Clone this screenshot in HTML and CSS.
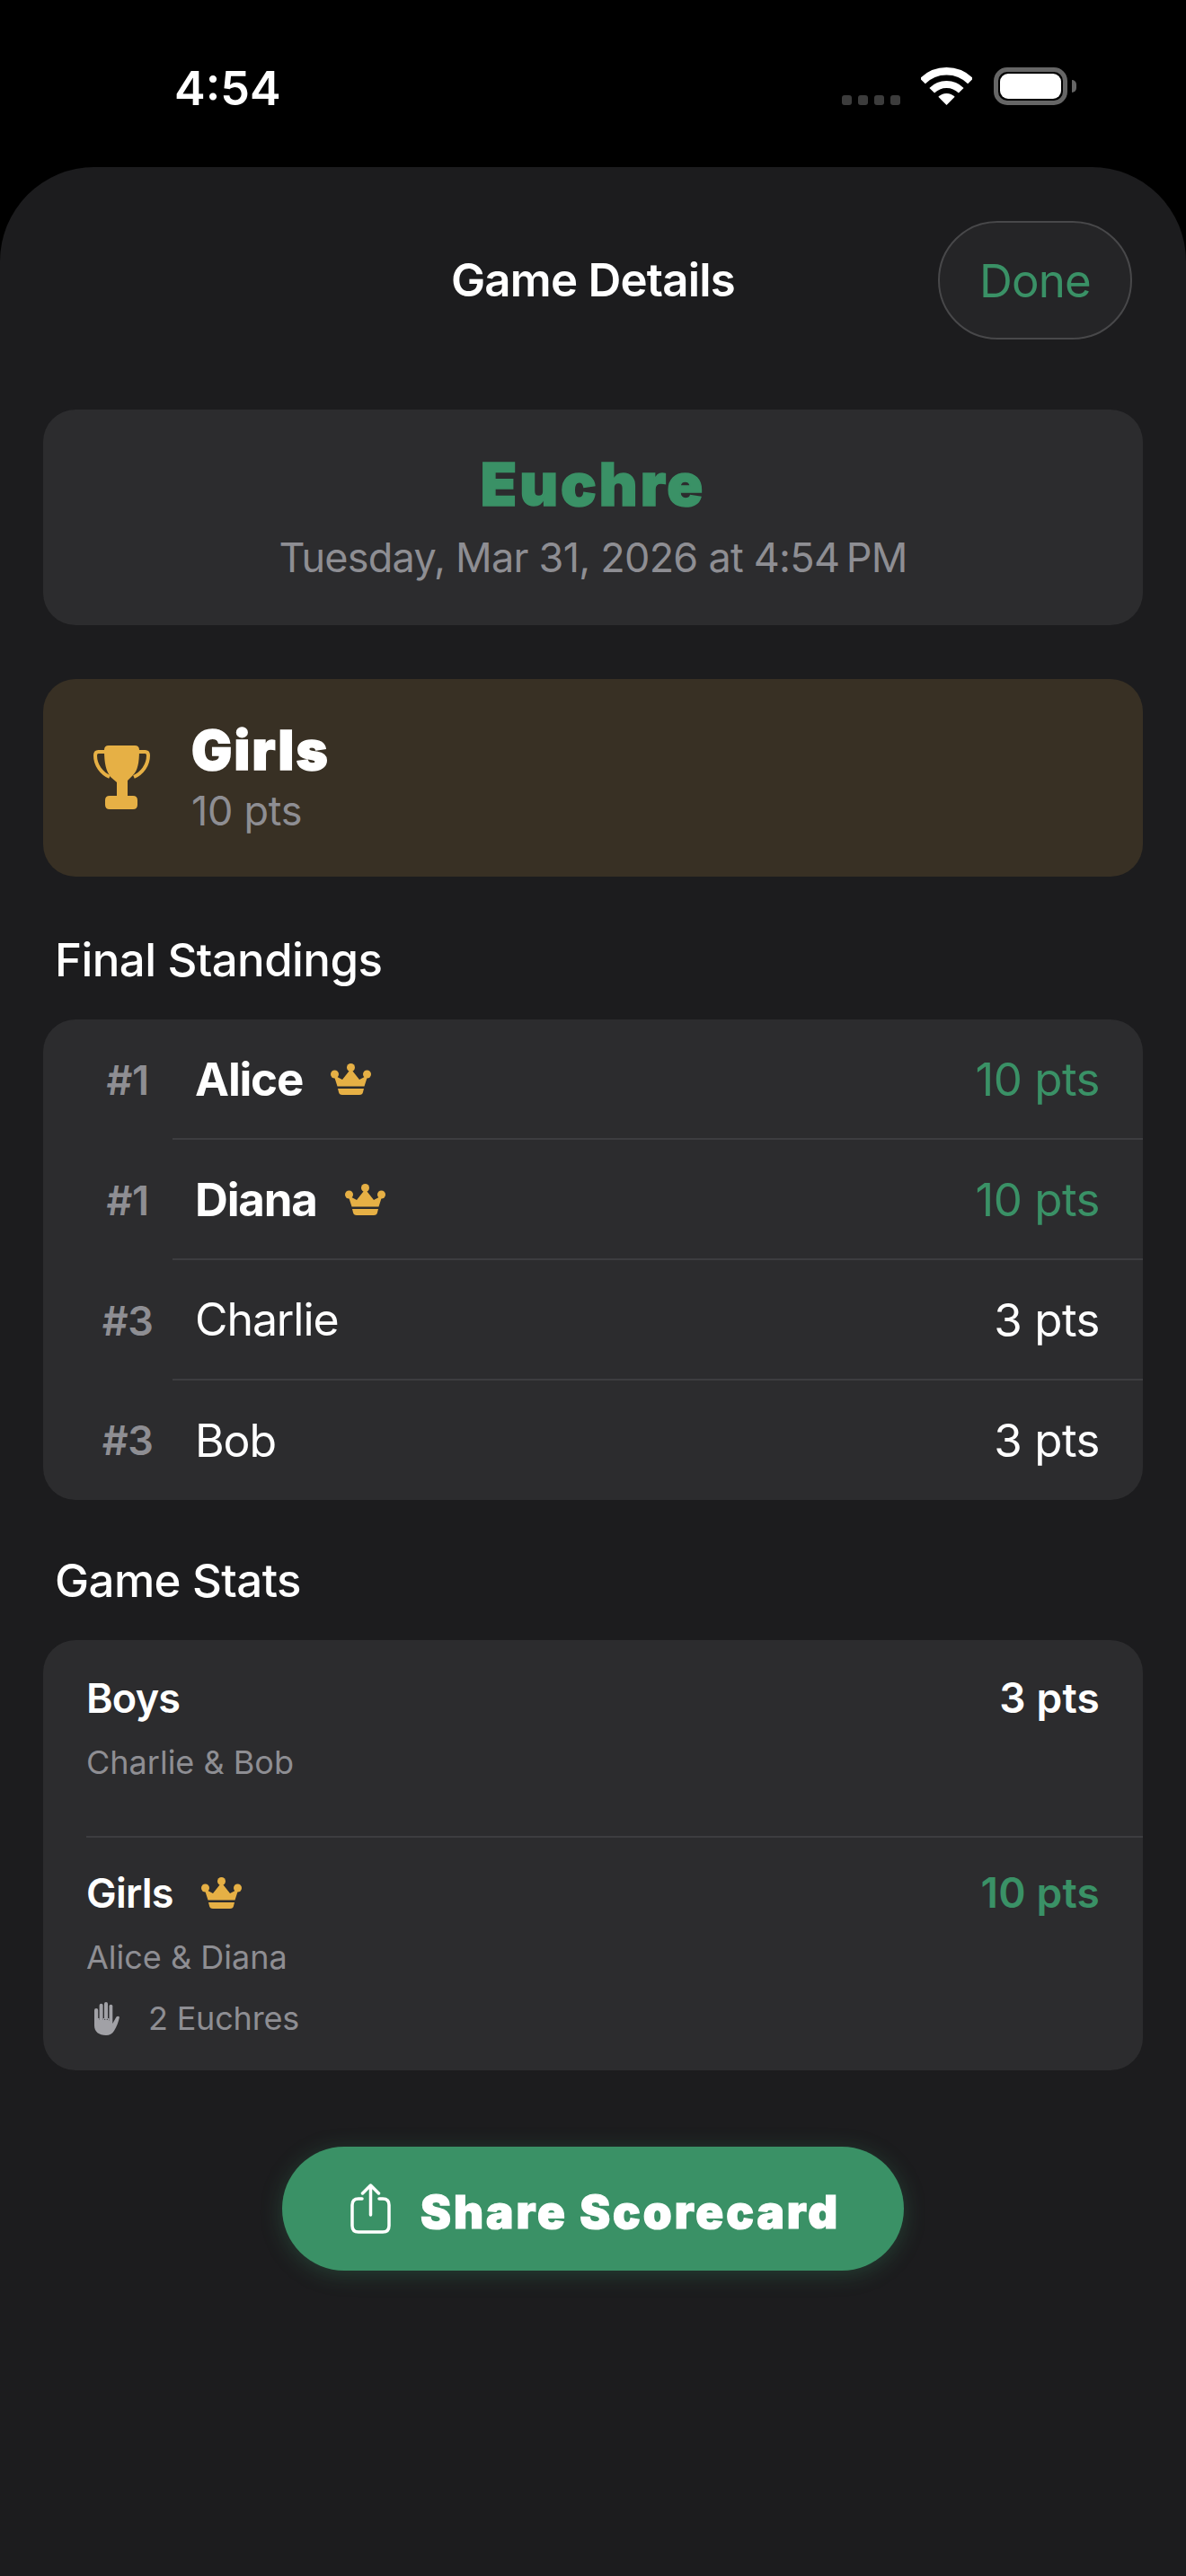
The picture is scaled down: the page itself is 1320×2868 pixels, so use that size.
FILE: index.html
```html
<!DOCTYPE html>
<html lang="en">
<head>
  <meta charset="UTF-8">
  <title>Game Details</title>
  <link rel="stylesheet" href="styles.css">
</head>
<body>

<div class="status-bar">
  <span class="time">4:54</span>
  <div class="status-icons">
    <div class="cell-dots"><i></i><i></i><i></i><i></i></div>
    <svg class="wifi" viewBox="0 0 57 42" width="57" height="42">
      <path d="M1.81 15.31A37.75 37.75 0 0 1 55.19 15.31" fill="none" stroke="#fff" stroke-width="8.5"/>
      <path d="M12.24 25.74A23 23 0 0 1 44.76 25.74" fill="none" stroke="#fff" stroke-width="8"/>
      <path d="M28.5 42L19.3 32.8A13 13 0 0 1 37.7 32.8Z" fill="#fff"/>
    </svg>
    <div class="battery"><div class="battery-fill"></div></div>
    <div class="battery-nub"></div>
  </div>
</div>

<div class="sheet">
  <div class="sheet-header">
    <span></span>
    <h1 class="sheet-title">Game Details</h1>
    <button class="done-btn">Done</button>
  </div>

  <div class="card hero">
    <div class="hero-title">Euchre</div>
    <div class="hero-date">Tuesday, Mar 31, 2026 at 4:54&#8201;PM</div>
  </div>

  <div class="card winner">
    <svg class="trophy" viewBox="0 0 63 71" width="63" height="71">
      <path d="M12 5Q12 0 17 0H46Q51 0 51 5C51 20 49 28 44 33L38 39V56H44Q49 56 49 61V66Q49 71 44 71H18Q13 71 13 66V61Q13 56 18 56H26V41L19 35C14 28 12 20 12 5Z" fill="#e6b045"/>
      <path d="M13 7H5.500Q2 7 2 11C2 22 9 31 18 35M50 7H57.500Q61 7 61 11C61 22 54 31 45 35" fill="none" stroke="#e6b045" stroke-width="4"/>
    </svg>
    <div>
      <div class="winner-name">Girls</div>
      <div class="winner-pts">10 pts</div>
    </div>
  </div>

  <h2 class="section-label">Final Standings</h2>
  <div class="card standings">
    <div class="row">
      <span class="rank">#1</span>
      <div class="row-body">
        <span class="player lead">Alice</span>
        <svg class="crown" viewBox="0 0 45 35" width="45" height="35"><use href="#crown-shape"/></svg>
        <span class="pts green">10 pts</span>
      </div>
    </div>
    <div class="row">
      <span class="rank">#1</span>
      <div class="row-body">
        <span class="player lead">Diana</span>
        <svg class="crown" viewBox="0 0 45 35" width="45" height="35"><use href="#crown-shape"/></svg>
        <span class="pts green">10 pts</span>
      </div>
    </div>
    <div class="row">
      <span class="rank">#3</span>
      <div class="row-body">
        <span class="player">Charlie</span>
        <span class="pts">3 pts</span>
      </div>
    </div>
    <div class="row">
      <span class="rank">#3</span>
      <div class="row-body">
        <span class="player">Bob</span>
        <span class="pts">3 pts</span>
      </div>
    </div>
  </div>

  <h2 class="section-label">Game Stats</h2>
  <div class="card stats">
    <div class="stat">
      <div class="stat-top">
        <span class="stat-name">Boys</span>
        <span class="stat-pts">3 pts</span>
      </div>
      <div class="stat-sub">Charlie &amp; Bob</div>
    </div>
    <div class="stat">
      <div class="stat-top">
        <span class="stat-name">Girls</span>
        <svg class="crown" viewBox="0 0 45 35" width="45" height="35"><use href="#crown-shape"/></svg>
        <span class="stat-pts green">10 pts</span>
      </div>
      <div class="stat-sub">Alice &amp; Diana</div>
      <div class="stat-extra">
        <svg class="hand" viewBox="0 0 28 37" width="28" height="37">
          <rect x="0" y="7" width="4.200" height="16" rx="2.100"/>
          <rect x="5.600" y="1.700" width="4" height="20" rx="2"/>
          <rect x="11" y="0" width="4" height="20" rx="2"/>
          <rect x="16.500" y="2.700" width="3.800" height="20" rx="1.900"/>
          <path d="M0 18H5.600V20H9.600V18H11V20H15V18H16.500V21H20.300V24L24.500 16.500Q26.500 14.800 28 16.800C27 22 25 27 22 32C20 35.500 17 37 13 37C5 37 0 33 0 26Z"/>
        </svg>
        <span>2 Euchres</span>
      </div>
    </div>
  </div>

  <button class="share-btn">
    <svg class="share-icon" viewBox="0 0 45 56" width="45" height="56">
      <path d="M13 17H9Q2 17 2 24V47Q2 54 9 54H36Q43 54 43 47V24Q43 17 36 17H32M22.500 3V35M13.500 11L22.500 2L31.500 11" fill="none" stroke="#fff" stroke-width="3.500" stroke-linecap="round" stroke-linejoin="round"/>
    </svg>
    <span class="share-text">Share Scorecard</span>
  </button>
</div>

<!-- shared crown -->
<svg class="defs" width="0" height="0">
  <symbol id="crown-shape" viewBox="0 0 45 35">
    <circle cx="22.500" cy="4.500" r="4.500"/>
    <circle cx="4.500" cy="12" r="4.500"/>
    <circle cx="40.500" cy="12" r="4.500"/>
    <path d="M7.500 25.500L3.500 13L13 18L22.500 6L32 18L41.500 13L37.500 25.500Z"/>
    <path d="M8 28H37L36 32Q35.500 35 32 35H13Q9.500 35 9 32Z"/>
  </symbol>
</svg>

</body>
</html>
```
FILE: styles.css
```css
* {
  box-sizing: border-box;
}

body {
  margin: 0;
  height: 2868px;
  overflow: hidden;
  background: #000;
  color: #fff;
  font-family: Inter, "Liberation Sans", sans-serif;
}

.status-bar {
  height: 186px;
  padding: 75px 122px 0 194px;
  display: flex;
  justify-content: space-between;
  align-items: flex-start;
}

.time {
  font-size: 52px;
  font-weight: 600;
  line-height: 48px;
}

.status-icons {
  display: flex;
  align-items: flex-end;
}

.cell-dots {
  display: flex;
  gap: 7px;
  margin-right: 23px;
}

.cell-dots i {
  width: 11px;
  height: 11px;
  border-radius: 3px;
  background: #3c3c3c;
}

.battery {
  width: 82px;
  height: 42px;
  margin-left: 24px;
  padding: 2px;
  border: 5px solid #666;
  border-radius: 15px;
}

.battery-fill {
  height: 100%;
  border-radius: 9px;
  background: #fff;
}

.battery-nub {
  width: 5px;
  height: 14px;
  margin: 0 0 14px 5px;
  border-radius: 0 5px 5px 0;
  background: #666;
}

.sheet {
  height: 2682px;
  padding: 60px 48px 0;
  border-radius: 105px 105px 0 0;
  background: #1c1c1e;
}

.sheet-header {
  display: grid;
  grid-template-columns: 1fr auto 1fr;
  align-items: center;
  margin-bottom: 78px;
}

.sheet-title {
  margin: 0;
  font-size: 51px;
  font-weight: 600;
  line-height: 60px;
  letter-spacing: -0.8px;
}

.done-btn {
  justify-self: end;
  width: 216px;
  height: 132px;
  margin-right: 12px;
  border: 2px solid #48484a;
  border-radius: 66px;
  background: #252527;
  color: #3a9166;
  font-family: inherit;
  font-size: 51px;
  font-weight: 400;
  letter-spacing: -0.8px;
}

.card {
  border-radius: 36px;
  background: #2c2c2e;
}

.hero {
  padding: 48px 0 50px;
  text-align: center;
}

.hero-title {
  font-size: 66px;
  font-weight: 900;
  line-height: 70px;
  letter-spacing: 3px;
  color: #3a9166;
  -webkit-text-stroke: 1.5px #3a9166;
}

.hero-date {
  margin-top: 22px;
  font-size: 45px;
  line-height: 50px;
  letter-spacing: -0.75px;
  color: #8e8e93;
}

.winner {
  display: flex;
  align-items: center;
  gap: 46px;
  margin-top: 60px;
  padding: 46px 56px 48px;
  background: #383024;
}

.winner-name {
  font-size: 60px;
  font-weight: 900;
  line-height: 66px;
  letter-spacing: 2.2px;
  -webkit-text-stroke: 1.5px #fff;
}

.winner-pts {
  margin-top: 10px;
  font-size: 45px;
  line-height: 50px;
  letter-spacing: -0.3px;
  color: #8e8e93;
}

.section-label {
  margin: 63px 0 36px 13px;
  font-size: 51px;
  font-weight: 500;
  line-height: 60px;
  letter-spacing: -0.6px;
}

.standings + .section-label {
  margin-top: 60px;
}

.row {
  display: flex;
  align-items: stretch;
  height: 134px;
}

.row:last-child {
  height: 133px;
}

.rank {
  width: 96px;
  margin-left: 46px;
  margin-right: 2px;
  align-self: center;
  font-size: 45px;
  font-weight: 600;
  letter-spacing: -0.5px;
  text-align: center;
  color: #8e8e93;
}

.row-body {
  flex: 1;
  display: flex;
  align-items: center;
  padding: 0 48px 0 25px;
  border-bottom: 2px solid #3d3d40;
}

.row:last-child .row-body {
  border-bottom: none;
}

.player {
  font-size: 50px;
  letter-spacing: -1.1px;
}

.lead {
  font-size: 51px;
  font-weight: 700;
  letter-spacing: -1.2px;
}

.crown {
  margin-left: 31px;
  fill: #e6b045;
}

.pts {
  margin-left: auto;
  font-size: 51px;
  letter-spacing: -0.5px;
}

.green {
  color: #3a9166;
}

.stat {
  min-height: 218px;
  margin-left: 48px;
  padding: 40px 48px 34px 0;
}

.stat + .stat {
  padding-top: 37px;
  border-top: 2px solid #3d3d40;
}

.stat-top {
  display: flex;
  align-items: center;
  height: 48px;
}

.stat-name {
  font-size: 45px;
  font-weight: 600;
  letter-spacing: -0.8px;
}

.stat-pts {
  margin-left: auto;
  font-size: 46px;
  font-weight: 600;
  letter-spacing: 0.2px;
}

.stat-sub {
  margin-top: 24px;
  font-size: 36px;
  line-height: 48px;
  color: #8e8e93;
}

.stat-extra {
  display: flex;
  align-items: center;
  gap: 32px;
  height: 48px;
  margin-top: 20px;
  padding-left: 9px;
  font-size: 36px;
  letter-spacing: -0.2px;
  color: #8e8e93;
}

.hand {
  fill: #a1a1a6;
}

.share-btn {
  display: flex;
  align-items: center;
  gap: 33px;
  width: 692px;
  height: 138px;
  margin: 85px auto 0;
  padding: 0 0 0 76px;
  border: none;
  border-radius: 69px;
  background: #3a9166;
  color: #fff;
  font-family: inherit;
  font-size: 51px;
  font-weight: 900;
  letter-spacing: 3px;
  -webkit-text-stroke: 1.2px #fff;
  box-shadow: 0 4px 24px rgba(58, 145, 102, 0.3);
}

.share-text {
  margin-top: 6px;
}

.defs {
  position: absolute;
}
```
